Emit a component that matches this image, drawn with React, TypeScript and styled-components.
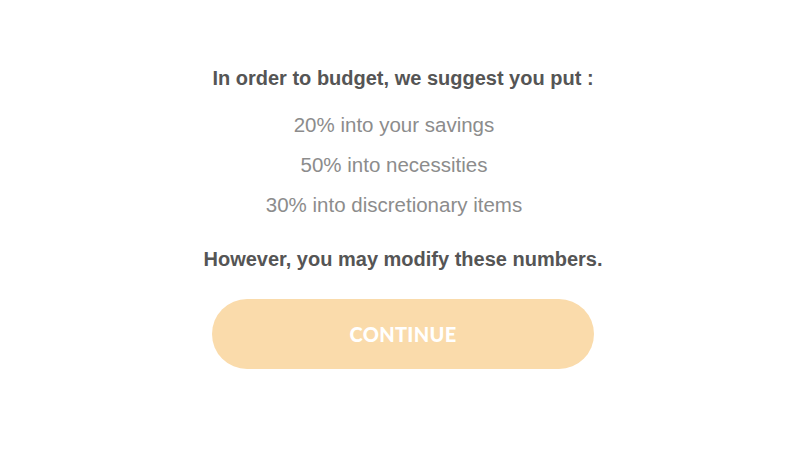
import React from 'react';
import styled, { createGlobalStyle } from 'styled-components';

const GlobalStyle = createGlobalStyle`
  html, body {
    margin: 0;
    padding: 0;
    background: #ffffff;
  }
  body {
    font-family: "Liberation Sans", Arial, Helvetica, sans-serif;
  }
`;

const Page = styled.div`
  width: 806px;
  height: 453px;
  display: flex;
  flex-direction: column;
  align-items: center;
  padding-top: 64px;
  box-sizing: border-box;
`;

const Heading = styled.h2`
  margin: 0;
  font-size: 20px;
  line-height: 28px;
  font-weight: 700;
  color: #555555;
  text-align: center;
`;

const Suggestions = styled.ul`
  list-style: none;
  margin: 19px 0 26px;
  padding: 0 18px 0 0;
  display: flex;
  flex-direction: column;
  align-items: center;
  gap: 12px;
`;

const Item = styled.li`
  font-size: 20.5px;
  line-height: 28px;
  color: #8c8c8c;
`;

const ContinueButton = styled.button`
  margin-top: 26px;
  width: 382px;
  height: 70px;
  border: none;
  border-radius: 35px;
  background: #fadbab;
  color: #ffffff;
  font-family: Lato, "Liberation Sans", sans-serif;
  font-weight: 900;
  font-size: 20px;
  letter-spacing: 0.3px;
  cursor: pointer;
`;

const items = [
  '20% into your savings',
  '50% into necessities',
  '30% into discretionary items',
];

const App: React.FC = () => {
  return (
    <>
      <GlobalStyle />
      <Page>
        <Heading>In order to budget, we suggest you put :</Heading>
        <Suggestions>
          {items.map(text => (
            <Item key={text}>{text}</Item>
          ))}
        </Suggestions>
        <Heading>However, you may modify these numbers.</Heading>
        <ContinueButton>CONTINUE</ContinueButton>
      </Page>
    </>
  );
};

export default App;
